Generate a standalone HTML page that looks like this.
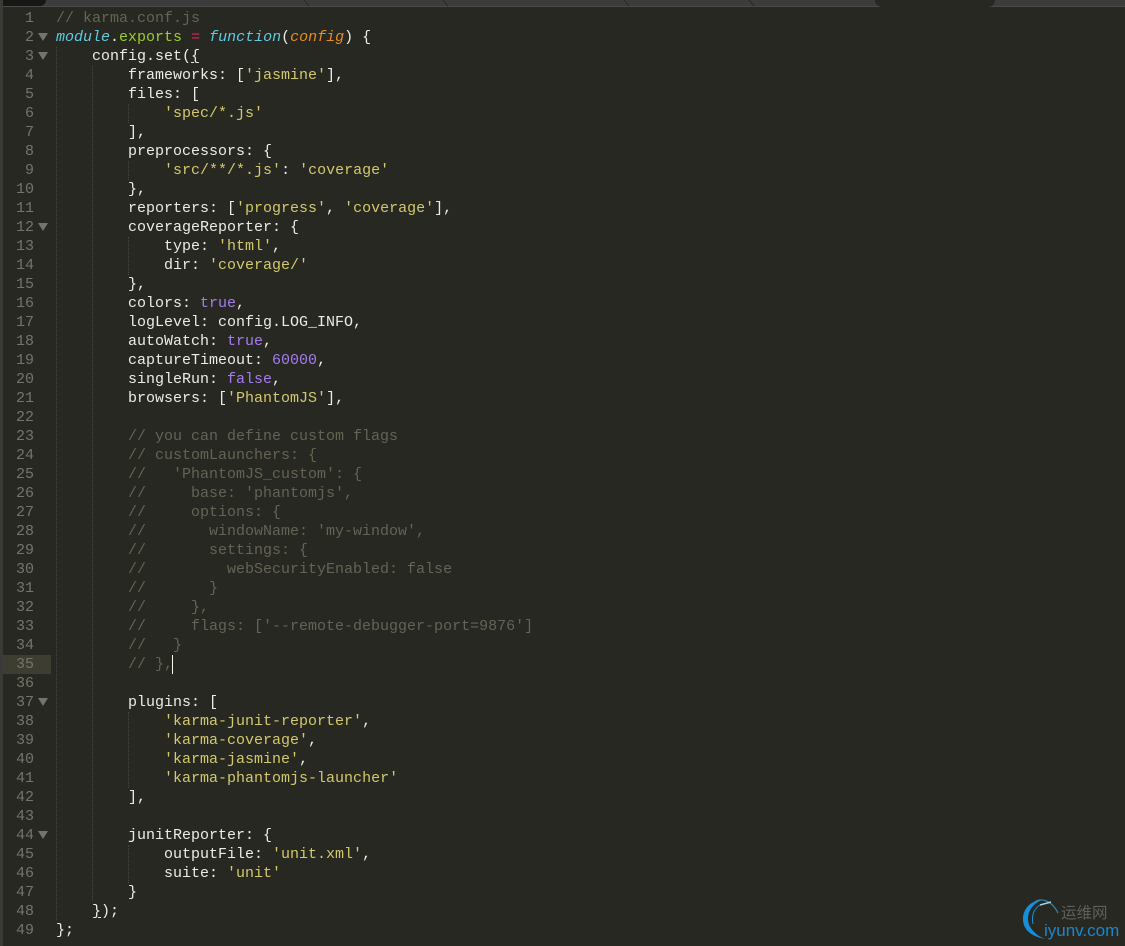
<!DOCTYPE html>
<html><head><meta charset="utf-8">
<style>
html,body{margin:0;padding:0;background:#272822;}
#r{position:relative;width:1125px;height:946px;overflow:hidden;background:#272822;font-family:"Liberation Mono",monospace;font-size:15px;}
.l,.n{position:absolute;height:19px;line-height:19px;white-space:pre;}
.l{left:56px;color:#ecece6;}
.n{left:0;width:34px;text-align:right;color:#74746c;}
.c{color:#656353}.s{color:#d3c86a}.b{color:#a57bf0}.k{color:#5fcbe0;font-style:italic}.g{color:#98cf2b}.r{color:#e0245f}.o{color:#ea8c1e;font-style:italic}
.u{text-decoration:underline;text-underline-offset:2px}
.f{position:absolute;left:38px;width:0;height:0;border-left:5px solid transparent;border-right:5px solid transparent;border-top:8px solid #74746c;}
.d{position:absolute;width:0;border-left:1px dotted #47483f;}
</style></head><body><div id="r">
<div style="position:absolute;left:0;top:0;width:1125px;height:6px;background:#3c3c3c;border-bottom:1px solid #4a4a4a"></div>
<div style="position:absolute;left:0;top:0;width:46px;height:6px;background:#171714;border-bottom-right-radius:7px"></div>
<div style="position:absolute;left:875px;top:0;width:120px;height:7px;background:#272822;border-radius:0 0 7px 7px"></div>
<svg style="position:absolute;left:0;top:0" width="1125" height="7" fill="none" stroke="#2a2a2a" stroke-width="1"><path d="M304 0L309 6M443 0L448 6M624 0L629 6M749 0L754 6"/></svg>
<div style="position:absolute;left:0;top:0;width:3px;height:946px;background:#3a3a38"></div>
<div style="position:absolute;left:3px;top:655px;width:48px;height:19px;background:#3e3d32"></div>

<div class="d" style="left:56px;top:47px;height:873px"></div>
<div class="d" style="left:92px;top:66px;height:835px"></div>
<div class="d" style="left:128px;top:104px;height:19px"></div>
<div class="d" style="left:128px;top:161px;height:19px"></div>
<div class="d" style="left:128px;top:237px;height:38px"></div>
<div class="d" style="left:128px;top:712px;height:76px"></div>
<div class="d" style="left:128px;top:845px;height:38px"></div>
<div style="position:absolute;left:172px;top:655px;width:1px;height:19px;background:#f8f8f0"></div>

<div class="f" style="top:33px"></div><div class="f" style="top:52px"></div><div class="f" style="top:223px"></div><div class="f" style="top:698px"></div><div class="f" style="top:831px"></div>

<div class="n" style="top:9px">1</div><div class="l" style="top:9px"><span class="c">// karma.conf.js</span></div>
<div class="n" style="top:28px">2</div><div class="l" style="top:28px"><span class="k">module</span>.<span class="g">exports</span> <span class="r">=</span> <span class="k">function</span>(<span class="o">config</span>) {</div>
<div class="n" style="top:47px">3</div><div class="l" style="top:47px">    config.set(<span class="u">{</span></div>
<div class="n" style="top:66px">4</div><div class="l" style="top:66px">        frameworks: [<span class="s">'jasmine'</span>],</div>
<div class="n" style="top:85px">5</div><div class="l" style="top:85px">        files: [</div>
<div class="n" style="top:104px">6</div><div class="l" style="top:104px">            <span class="s">'spec/*.js'</span></div>
<div class="n" style="top:123px">7</div><div class="l" style="top:123px">        ],</div>
<div class="n" style="top:142px">8</div><div class="l" style="top:142px">        preprocessors: {</div>
<div class="n" style="top:161px">9</div><div class="l" style="top:161px">            <span class="s">'src/**/*.js'</span>: <span class="s">'coverage'</span></div>
<div class="n" style="top:180px">10</div><div class="l" style="top:180px">        },</div>
<div class="n" style="top:199px">11</div><div class="l" style="top:199px">        reporters: [<span class="s">'progress'</span>, <span class="s">'coverage'</span>],</div>
<div class="n" style="top:218px">12</div><div class="l" style="top:218px">        coverageReporter: {</div>
<div class="n" style="top:237px">13</div><div class="l" style="top:237px">            type: <span class="s">'html'</span>,</div>
<div class="n" style="top:256px">14</div><div class="l" style="top:256px">            dir: <span class="s">'coverage/'</span></div>
<div class="n" style="top:275px">15</div><div class="l" style="top:275px">        },</div>
<div class="n" style="top:294px">16</div><div class="l" style="top:294px">        colors: <span class="b">true</span>,</div>
<div class="n" style="top:313px">17</div><div class="l" style="top:313px">        logLevel: config.LOG_INFO,</div>
<div class="n" style="top:332px">18</div><div class="l" style="top:332px">        autoWatch: <span class="b">true</span>,</div>
<div class="n" style="top:351px">19</div><div class="l" style="top:351px">        captureTimeout: <span class="b">60000</span>,</div>
<div class="n" style="top:370px">20</div><div class="l" style="top:370px">        singleRun: <span class="b">false</span>,</div>
<div class="n" style="top:389px">21</div><div class="l" style="top:389px">        browsers: [<span class="s">'PhantomJS'</span>],</div>
<div class="n" style="top:408px">22</div>
<div class="n" style="top:427px">23</div><div class="l c" style="top:427px">        // you can define custom flags</div>
<div class="n" style="top:446px">24</div><div class="l c" style="top:446px">        // customLaunchers: {</div>
<div class="n" style="top:465px">25</div><div class="l c" style="top:465px">        //   'PhantomJS_custom': {</div>
<div class="n" style="top:484px">26</div><div class="l c" style="top:484px">        //     base: 'phantomjs',</div>
<div class="n" style="top:503px">27</div><div class="l c" style="top:503px">        //     options: {</div>
<div class="n" style="top:522px">28</div><div class="l c" style="top:522px">        //       windowName: 'my-window',</div>
<div class="n" style="top:541px">29</div><div class="l c" style="top:541px">        //       settings: {</div>
<div class="n" style="top:560px">30</div><div class="l c" style="top:560px">        //         webSecurityEnabled: false</div>
<div class="n" style="top:579px">31</div><div class="l c" style="top:579px">        //       }</div>
<div class="n" style="top:598px">32</div><div class="l c" style="top:598px">        //     },</div>
<div class="n" style="top:617px">33</div><div class="l c" style="top:617px">        //     flags: ['--remote-debugger-port=9876']</div>
<div class="n" style="top:636px">34</div><div class="l c" style="top:636px">        //   }</div>
<div class="n" style="top:655px">35</div><div class="l c" style="top:655px">        // },</div>
<div class="n" style="top:674px">36</div>
<div class="n" style="top:693px">37</div><div class="l" style="top:693px">        plugins: [</div>
<div class="n" style="top:712px">38</div><div class="l" style="top:712px">            <span class="s">'karma-junit-reporter'</span>,</div>
<div class="n" style="top:731px">39</div><div class="l" style="top:731px">            <span class="s">'karma-coverage'</span>,</div>
<div class="n" style="top:750px">40</div><div class="l" style="top:750px">            <span class="s">'karma-jasmine'</span>,</div>
<div class="n" style="top:769px">41</div><div class="l" style="top:769px">            <span class="s">'karma-phantomjs-launcher'</span></div>
<div class="n" style="top:788px">42</div><div class="l" style="top:788px">        ],</div>
<div class="n" style="top:807px">43</div>
<div class="n" style="top:826px">44</div><div class="l" style="top:826px">        junitReporter: {</div>
<div class="n" style="top:845px">45</div><div class="l" style="top:845px">            outputFile: <span class="s">'unit.xml'</span>,</div>
<div class="n" style="top:864px">46</div><div class="l" style="top:864px">            suite: <span class="s">'unit'</span></div>
<div class="n" style="top:883px">47</div><div class="l" style="top:883px">        }</div>
<div class="n" style="top:902px">48</div><div class="l" style="top:902px">    <span class="u">}</span>);</div>
<div class="n" style="top:921px">49</div><div class="l" style="top:921px">};</div>

<svg style="position:absolute;left:1015px;top:893px" width="60" height="53" viewBox="0 0 60 53" fill="none">
<path d="M27 7C17 7 8 15 8 26C8 35 14 43 30 46C20 42 13 34 13 26C13 17 19 10 27 7Z" fill="#1590d8"/>
<path d="M20 9C25 5 36 6 43 20" stroke="#3a8fbe" stroke-width="1"/>
<path d="M25 12C20 15 16 21 18 31" stroke="#1590d8" stroke-width="1"/>
<path d="M25 12L36 9" stroke="#9ad4f2" stroke-width="1.5"/>
</svg>
<div style="position:absolute;left:1061px;top:903px;font:15.5px/18px 'Noto Sans CJK SC',sans-serif;color:#5f5f5c;white-space:nowrap">运维网</div>
<div style="position:absolute;left:1044px;top:921px;font:17px/20px 'Liberation Sans',sans-serif;color:#1b86c8;white-space:nowrap">iyunv.com</div>
</div></body></html>
